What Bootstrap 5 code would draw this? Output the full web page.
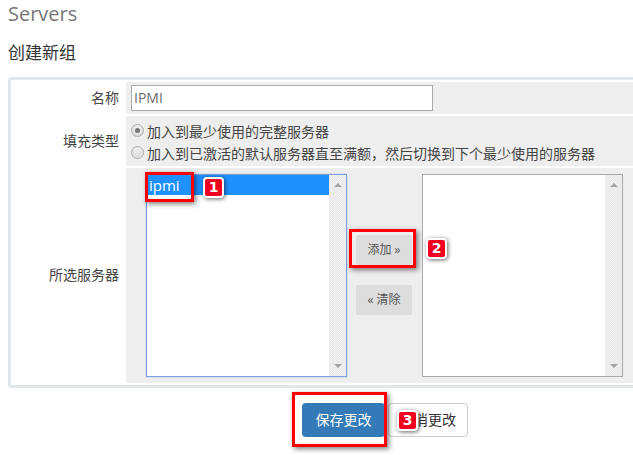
<!DOCTYPE html>
<html lang="zh">
<head>
<meta charset="utf-8">
<title>Servers</title>
<link href="https://cdn.jsdelivr.net/npm/bootstrap@5.3.0/dist/css/bootstrap.min.css" rel="stylesheet">
<style>
html,body{height:455px;overflow:hidden;background:#fff}
body{font-family:"Open Sans","Noto Sans CJK SC",sans-serif;font-size:14px;color:#444;position:relative}
.page-wrap{width:640px;padding:0 0 0 8px}
.ttl{font-size:20px;line-height:24px;height:24px;margin:2px 0 0;color:#777;font-weight:400}
.sub{font-size:17px;line-height:24px;margin:15px 0 0;color:#333;font-weight:400}
.frame{margin-top:12px;border:3px solid #e2e6e8;border-radius:3px;width:640px;padding-top:2px;padding-bottom:2px}
.frow{margin-bottom:2px}
.frow:last-child{margin-bottom:0}
.lab{width:115px;flex:none;text-align:right;padding-right:7px;padding-bottom:2px}
.cell{flex:1;background:#eee}
.r1{height:32px}.r2{height:50px}.r3{height:215px}
.txt{margin-left:5px;margin-top:3px;width:302px;height:26px;border:1px solid #aaa;background:#fff;color:#6b6b6b;padding:0 2px;font-size:14px;line-height:24px;display:block}
.opt{line-height:19px;height:22px;color:#444}
.dot{width:13px;height:13px;border-radius:50%;border:1px solid #aaa;background:linear-gradient(#eee,#ddd);margin:-1px 3px 0 5px;flex:none;display:flex;align-items:center;justify-content:center}
.dot i{width:5px;height:5px;border-radius:50%;background:#777;display:block}
.r2 .cell{padding-top:4px}
.lbox{width:201px;height:203px;background:#fff;border:1px solid #aaa;flex:none}
.lbox-a{margin-left:20px;margin-top:6px;border-color:#7b9fdf;box-shadow:0 0 1px #7b9fdf}
.lbox-b{margin-top:6px}
.lbody{flex:1;min-width:0}
.sel{background:#1e90ff;color:#fff;height:20px;font-size:15px;line-height:20px;padding-left:2px}
.sb{width:17px;flex:none;background-color:#f1f1f1;background-image:linear-gradient(45deg,#e8e8e8 25%,transparent 25%,transparent 75%,#e8e8e8 75%),linear-gradient(45deg,#e8e8e8 25%,transparent 25%,transparent 75%,#e8e8e8 75%);background-size:2px 2px;background-position:0 0,1px 1px;padding:8px 0}
.up{width:0;height:0;border:4.5px solid transparent;border-top:0;border-bottom:4px solid #a3a3a3}
.dn{width:0;height:0;border:4.5px solid transparent;border-bottom:0;border-top:4px solid #a3a3a3}
.mid{width:75px;flex:none;padding-top:67px}
.gbtn{background:#ddd;color:#555;width:56px;height:30px;font-size:12px;line-height:30px;text-align:center;border-radius:3px;margin-left:9px}
.gbtn+.gbtn{margin-top:20px}
.foot{margin-top:15px;padding-left:294px;gap:3px}
.save{background:#337ab7;color:#fff;width:83px;height:34px;border-radius:4px;font-size:14px;line-height:34px;text-align:center}
.cancel{background:#fff;color:#333;width:80px;height:34px;border:1px solid #ccc;border-radius:4px;font-size:14px;line-height:32px;text-align:center}
.redbox{position:absolute;border:3px solid #f00;box-shadow:2px 2px 5px rgba(0,0,0,.5)}
.num{position:absolute;width:21px;height:21px;background:#f0001e;border:2px solid #fff;border-radius:4px;box-shadow:1px 1px 4px rgba(0,0,0,.6);color:#fff;font:700 14px/17px "DejaVu Sans",sans-serif;text-align:center}
</style>
</head>
<body>
<div class="page-wrap">
  <h1 class="ttl">Servers</h1>
  <h2 class="sub">创建新组</h2>
  <div class="frame">
    <div class="frow r1 d-flex">
      <div class="lab d-flex align-items-center justify-content-end">名称</div>
      <div class="cell"><div class="txt">IPMI</div></div>
    </div>
    <div class="frow r2 d-flex">
      <div class="lab d-flex align-items-center justify-content-end">填充类型</div>
      <div class="cell">
        <div class="opt d-flex align-items-center"><span class="dot"><i></i></span>加入到最少使用的完整服务器</div>
        <div class="opt d-flex align-items-center"><span class="dot"></span>加入到已激活的默认服务器直至满额，然后切换到下个最少使用的服务器</div>
      </div>
    </div>
    <div class="frow r3 d-flex">
      <div class="lab d-flex align-items-center justify-content-end">所选服务器</div>
      <div class="cell d-flex">
        <div class="lbox lbox-a d-flex">
          <div class="lbody"><div class="sel">ipmi</div></div>
          <div class="sb d-flex flex-column align-items-center justify-content-between"><div class="up"></div><div class="dn"></div></div>
        </div>
        <div class="mid">
          <div class="gbtn">添加 »</div>
          <div class="gbtn">« 清除</div>
        </div>
        <div class="lbox lbox-b d-flex">
          <div class="lbody"></div>
          <div class="sb d-flex flex-column align-items-center justify-content-between"><div class="up"></div><div class="dn"></div></div>
        </div>
      </div>
    </div>
  </div>
  <div class="foot d-flex">
    <div class="save">保存更改</div>
    <div class="cancel">取消更改</div>
  </div>
</div>
<div class="redbox" style="left:145px;top:172px;width:49px;height:30px"></div>
<div class="redbox" style="left:349px;top:229px;width:67px;height:39px"></div>
<div class="redbox" style="left:292px;top:392px;width:95px;height:55px"></div>
<div class="num" style="left:203px;top:177px">1</div>
<div class="num" style="left:426px;top:238px">2</div>
<div class="num" style="left:397px;top:410px">3</div>
</body>
</html>
